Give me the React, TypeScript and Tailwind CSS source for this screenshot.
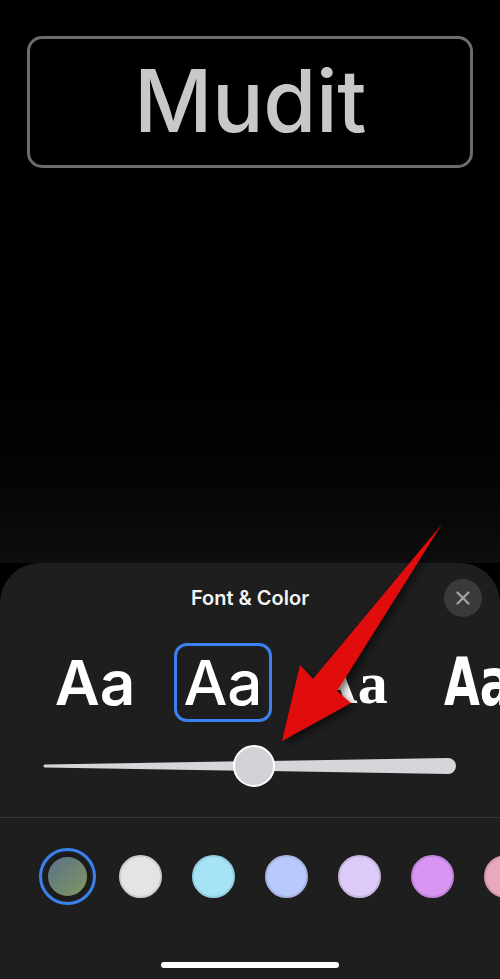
import { X } from "lucide-react";

const swatches = [
  { bg: "bg-[#e4e4e4]", ring: "border-[#cdcdcd]" },
  { bg: "bg-[#a6e3f6]", ring: "border-[#92cfe2]" },
  { bg: "bg-[#b9c9fb]", ring: "border-[#a6b4e0]" },
  { bg: "bg-[#dccbf8]", ring: "border-[#c5b6e0]" },
  { bg: "bg-[#d895f2]", ring: "border-[#c283db]" },
  { bg: "bg-[#e8a9be]", ring: "border-[#d296aa]" },
];

function FontChoice({ label, className, selected }: { label: string; className: string; selected?: boolean }) {
  return (
    <div
      className={
        "shrink-0 w-[98px] h-[79px] flex items-center justify-center rounded-[13px] border-[3px] " +
        (selected ? "border-[#3b82f0]" : "border-transparent")
      }
    >
      <span className={"text-white leading-none " + className}>{label}</span>
    </div>
  );
}

function Slider() {
  return (
    <div className="relative h-[42px] mx-[43px]">
      <svg className="absolute inset-0" width="414" height="42" viewBox="0 0 414 42">
        <path d="M2 19.5 L405 13 A8 8 0 0 1 405 29 L2 22.5 A1.5 1.5 0 0 1 2 19.5 Z" fill="#d6d6da" />
      </svg>
      <div className="absolute left-[190px] top-0 w-[42px] h-[42px] rounded-full bg-[#d1d1d6] border-2 border-white" />
    </div>
  );
}

export default function App() {
  return (
    <div className="relative w-[500px] h-[979px] overflow-hidden bg-black font-['Inter','Liberation_Sans',sans-serif]">
      <div className="h-[563px] pt-[36px] px-[27px] bg-gradient-to-b from-black via-black to-[#0e0e0e]">
        <div className="h-[132px] rounded-[15px] border-[3px] border-[#6c6c6c] flex items-center justify-center">
          <span className="text-[86px] font-medium leading-none text-[#c8c8c8] tracking-[-0.5px] -mt-[2px]">Mudit</span>
        </div>
      </div>

      <div className="h-[416px] rounded-t-[40px] bg-[#1e1e1e] flex flex-col">
        <div className="relative pt-[22px] flex justify-center">
          <span className="text-[20px] leading-[26px] font-semibold text-[#f4f4f4]">Font &amp; Color</span>
          <button
            type="button"
            className="absolute right-[18px] top-[16px] w-[38px] h-[38px] rounded-full bg-[#3a3a3c] flex items-center justify-center"
          >
            <X className="w-[22px] h-[22px] text-[#a3a3a6]" strokeWidth={2.6} />
          </button>
        </div>

        <div className="mt-[32px] flex gap-[30px] pl-[46px] overflow-hidden">
          <FontChoice label="Aa" className="text-[62px] font-semibold" />
          <FontChoice label="Aa" className="text-[62px] font-medium" selected />
          <FontChoice label="Aa" className="text-[60px] font-bold font-['Liberation_Serif',serif]" />
          <div className="shrink-0 w-[98px] h-[79px] flex items-center pl-[14px]">
            <span className="inline-block origin-left scale-x-[0.78] text-white leading-none text-[66px] font-bold font-['DejaVu_Sans_Condensed','Liberation_Sans',sans-serif]">
              Aa
            </span>
          </div>
        </div>

        <div className="mt-[23px]">
          <Slider />
        </div>

        <div className="mt-[30px] h-px bg-[#363636]" />

        <div className="mt-[30px] flex items-center gap-[30px] pl-[39px] overflow-hidden">
          <div className="shrink-0 -mr-[7px] w-[57px] h-[57px] rounded-full border-[3px] border-[#3b82f0] flex items-center justify-center">
            <div className="w-[45px] h-[45px] rounded-full border-[3px] border-[#1b1b1b] bg-gradient-to-br from-[#5a7186] to-[#82955f]" />
          </div>
          {swatches.map((s, i) => (
            <div key={i} className={"shrink-0 w-[43px] h-[43px] rounded-full border-2 " + s.bg + " " + s.ring} />
          ))}
        </div>

        <div className="mt-[57px] mx-auto w-[178px] h-[6px] rounded-full bg-white" />
      </div>

      <svg className="absolute inset-0 pointer-events-none" width="500" height="979" viewBox="0 0 500 979">
        <defs>
          <filter id="sh" x="-20%" y="-20%" width="140%" height="140%">
            <feDropShadow dx="3" dy="4" stdDeviation="4" floodColor="#000" floodOpacity="0.6" />
          </filter>
        </defs>
        <path
          d="M442 524 L337 691 L351 703 L282 741 L300 665 L313 679 Z"
          fill="#e10a0a"
          filter="url(#sh)"
        />
      </svg>
    </div>
  );
}
